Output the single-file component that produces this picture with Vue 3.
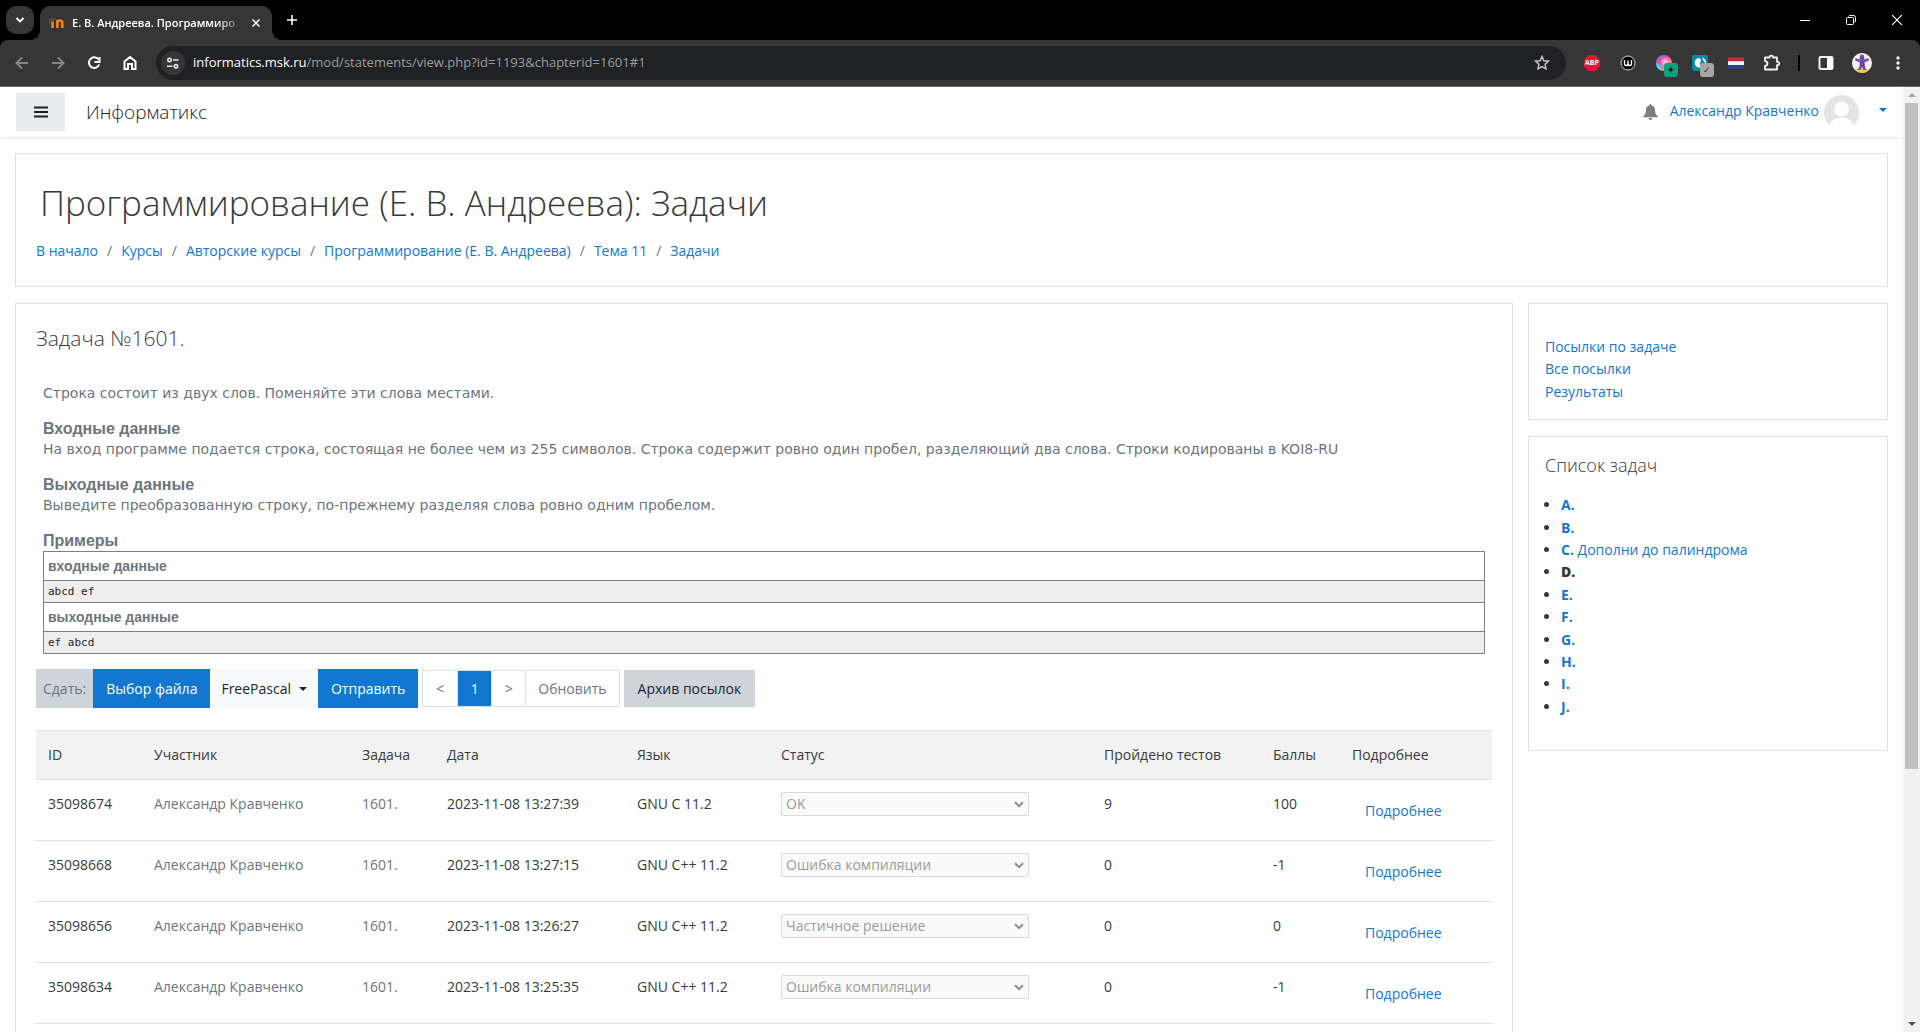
<script setup>
const crumbs = ['В начало', 'Курсы', 'Авторские курсы', 'Программирование (Е. В. Андреева)', 'Тема 11', 'Задачи']
const links = ['Посылки по задаче', 'Все посылки', 'Результаты']
const problems = [
  { key: 'A.' }, { key: 'B.' }, { key: 'C.', title: 'Дополни до палиндрома' }, { key: 'D.', current: true },
  { key: 'E.' }, { key: 'F.' }, { key: 'G.' }, { key: 'H.' }, { key: 'I.' }, { key: 'J.' },
]
const columns = [
  { name: 'ID', width: 106 }, { name: 'Участник', width: 208 }, { name: 'Задача', width: 85 },
  { name: 'Дата', width: 190 }, { name: 'Язык', width: 144 }, { name: 'Статус', width: 323 },
  { name: 'Пройдено тестов', width: 169 }, { name: 'Баллы', width: 79 }, { name: 'Подробнее', width: 152 },
]
const runs = [
  { id: '35098674', date: '2023-11-08 13:27:39', lang: 'GNU C 11.2', status: 'OK', tests: 9, score: 100 },
  { id: '35098668', date: '2023-11-08 13:27:15', lang: 'GNU C++ 11.2', status: 'Ошибка компиляции', tests: 0, score: -1 },
  { id: '35098656', date: '2023-11-08 13:26:27', lang: 'GNU C++ 11.2', status: 'Частичное решение', tests: 0, score: 0 },
  { id: '35098634', date: '2023-11-08 13:25:35', lang: 'GNU C++ 11.2', status: 'Ошибка компиляции', tests: 0, score: -1 },
]
</script>

<template>
  <div class="window">
    <div class="tabstrip">
      <button class="tab-search" aria-label="Поиск вкладок">
        <svg width="10" height="10" viewBox="0 0 10 10"><path d="M1.5 3l3.5 3.5L8.5 3" fill="none" stroke="#fff" stroke-width="1.8" /></svg>
      </button>
      <div class="tab">
        <svg class="favicon" width="16" height="16" viewBox="0 0 16 16">
          <path d="M4.500 13V6.500M9.300 13V5M9.300 8q0-2.500 2.500-2.500t2.500 2.500v5" fill="none" stroke="#f98012" stroke-width="2.600" />
          <path d="M0 5L4 3l4 .5-2.500 3L2 6z" fill="#5a4a42" /><path d="M1.500 5.500v4" stroke="#5a4a42" />
        </svg>
        <span class="tab-title">Е. В. Андреева. Программиро</span>
        <button class="tab-close" aria-label="Закрыть">
          <svg width="8" height="8" viewBox="0 0 8 8"><path d="M.5.5l7 7m0-7l-7 7" stroke="#fff" stroke-width="1.500" /></svg>
        </button>
      </div>
      <button class="new-tab" aria-label="Новая вкладка">
        <svg width="10" height="10" viewBox="0 0 10 10"><path d="M5 0v10M0 5h10" stroke="#fff" stroke-width="1.600" /></svg>
      </button>
      <div class="win-buttons">
        <button aria-label="Свернуть"><svg width="10" height="10" viewBox="0 0 10 10"><path d="M0 5.500h10" stroke="#fff" /></svg></button>
        <button aria-label="Восстановить"><svg width="10" height="10" viewBox="0 0 10 10" fill="none" stroke="#fff"><rect x=".5" y="2.500" width="7" height="7" rx="1" /><path d="M2.500 1.500Q3 .5 4 .5h3.500q2 0 2 2V6q0 1-1 1.500" /></svg></button>
        <button aria-label="Закрыть окно"><svg width="10" height="10" viewBox="0 0 10 10"><path d="M0 0l10 10M10 0L0 10" stroke="#fff" stroke-width="1.200" /></svg></button>
      </div>
    </div>

    <div class="toolbar">
      <button class="nav dim" aria-label="Назад"><svg width="16" height="16" viewBox="0 0 16 16"><path d="M14 8H3M8 2.500L2.500 8 8 13.500" /></svg></button>
      <button class="nav dim" aria-label="Вперёд"><svg width="16" height="16" viewBox="0 0 16 16"><path d="M2 8h11M8 2.500L13.500 8 8 13.500" /></svg></button>
      <button class="nav" aria-label="Обновить страницу"><svg width="16" height="16" viewBox="0 0 16 16"><path d="M12.500 4.500A5.300 5.300 0 1 0 13.200 9.500" /><path d="M13.500 2v5h-5" /></svg></button>
      <button class="nav" aria-label="Домой"><svg width="16" height="16" viewBox="0 0 16 16"><path d="M2.500 14V6.500L8 2l5.500 4.500V14H10V9H6v5z" /></svg></button>
      <div class="omnibox">
        <button class="site-info" aria-label="Сведения о сайте">
          <svg width="14" height="14" viewBox="0 0 14 14" fill="none" stroke="#e8eaed" stroke-width="1.600"><circle cx="3.500" cy="4" r="1.700" /><path d="M7 4h5.500M1 10.200h5.500" /><circle cx="10" cy="10.200" r="1.700" /></svg>
        </button>
        <div class="url"><span class="host">informatics.msk.ru</span>/mod/statements/view.php?id=1193&amp;chapterid=1601#1</div>
        <button class="star" aria-label="В закладки"><svg width="16" height="16" viewBox="0 0 16 16"><path d="M8 1.500l1.900 4.200 4.600.5-3.400 3.100.9 4.500L8 11.500l-4 2.300.9-4.500L1.500 6.200l4.600-.5z" fill="none" stroke="#c7c7c7" stroke-width="1.500" /></svg></button>
      </div>
      <div class="extensions">
        <button class="ext" aria-label="ABP"><span class="abp">ABP</span></button>
        <button class="ext" aria-label="W">
          <svg width="16" height="16" viewBox="0 0 16 16"><circle cx="8" cy="8" r="7" fill="#000" stroke="#d8d8d8" /><path d="M4.500 5v3.500q0 2 1.700 2T8 8.500V5.500v3q0 2 1.800 2t1.700-2V5" fill="none" stroke="#fff" stroke-width="1.400" /></svg>
        </button>
        <button class="ext" aria-label="AI">
          <svg width="16" height="16" viewBox="0 0 16 16"><defs><linearGradient id="ring" x1="0" y1="0" x2="1" y2="1"><stop offset="0" stop-color="#6f7df0" /><stop offset=".4" stop-color="#e84fa5" /><stop offset=".7" stop-color="#ff8d7a" /><stop offset="1" stop-color="#58b6f0" /></linearGradient><radialGradient id="core"><stop offset="0" stop-color="#ffd9ea" /><stop offset="1" stop-color="#ffd9ea" stop-opacity="0" /></radialGradient></defs><circle cx="8" cy="8" r="8" fill="url(#ring)" /><path d="M0 8a8 8 0 0 0 6 7.800L5 10z" fill="#5cc9f2" /><circle cx="9" cy="7" r="5" fill="url(#core)" /></svg>
          <span class="badge green">✦</span>
        </button>
        <button class="ext" aria-label="Расширение">
          <svg width="16" height="16" viewBox="0 0 16 16"><rect width="16" height="16" rx="2" fill="#0389a6" /><path d="M6 3Q1.500 5 3 9.500q2 4 7 3-3-1.500-2-4t1-4.500z" fill="#fff" /><path d="M10 2q4 2 4 6l-2-1z" fill="#fff" /></svg>
          <span class="badge grey">✓</span>
        </button>
        <button class="ext" aria-label="Флаг">
          <svg width="16" height="16" viewBox="0 0 16 16"><path d="M0 2.500h16v3.800H0z" fill="#c8283c" /><path d="M0 6.200h16v3.800H0z" fill="#f4f4f4" /><path d="M0 10h16v3.500H0z" fill="#21468b" /></svg>
        </button>
        <button class="ext" aria-label="Расширения">
          <svg width="18" height="18" viewBox="0 0 18 18"><path d="M2 3.500h4.500q0-1.800 1.800-1.800t1.800 1.800H14v4.300q2.300 0 2.300 1.700T14 11.200V15.500H2V12q2.500-.5 2.500-2.500T2 7z" fill="none" stroke="#f1f1f1" stroke-width="1.800" stroke-linejoin="round" /></svg>
        </button>
        <span class="divider"></span>
        <button class="ext" aria-label="Боковая панель">
          <svg width="16" height="16" viewBox="0 0 16 16"><rect x="1.500" y="2" width="13" height="12" rx="1" fill="none" stroke="#f1f1f1" stroke-width="2" /><path d="M9 2h5v12H9z" fill="#fff" /></svg>
        </button>
        <button class="ext profile" aria-label="Профиль">
          <svg width="20" height="20" viewBox="0 0 20 20"><circle cx="10" cy="10" r="10" fill="#f4f2f6" /><path d="M3 15.500q7-1.500 14 1-3 3.500-7 3.500-5-.5-7-4.500z" fill="#e6cf3c" /><path d="M8 2.500q2-1.800 4 0l.5 4 4-1.500.5 2.500-4.500 2 .5 3.500 1 4h-2.500l-1.500-3-1.500 3H6l1.500-4 .3-3.500L3 7.500 3.500 5 7.500 6.500z" fill="#7a4fb0" /><path d="M8.500 5h3M9 9.500h2.500v3H9z" stroke="#3f2468" stroke-width=".8" fill="#9d79cc" /></svg>
        </button>
        <button class="ext more" aria-label="Меню"><svg width="4" height="16" viewBox="0 0 4 16" fill="#f1f1f1"><circle cx="2" cy="3" r="1.700" /><circle cx="2" cy="8" r="1.700" /><circle cx="2" cy="13" r="1.700" /></svg></button>
      </div>
    </div>

    <div class="viewport">
      <div class="page">
        <header class="navbar">
          <button class="drawer" aria-label="Боковая панель">
            <svg width="14" height="12" viewBox="0 0 14 12"><path d="M0 1.500h14M0 6h14M0 10.500h14" stroke="#1d2125" stroke-width="2" /></svg>
          </button>
          <a class="brand" href="#">Информатикс</a>
          <button class="bell" aria-label="Уведомления">
            <svg width="15" height="16" viewBox="0 0 15 16"><path d="M7.500 0q.9 0 .9 1.200C11 1.800 12 3.800 12 6q0 4.500 3 6.500v.8H0v-.8Q3 10.500 3 6c0-2.200 1-4.200 3.600-4.800Q6.600 0 7.500 0zM5.500 14h4q-.3 2-2 2t-2-2z" fill="#7d7d7d" /></svg>
          </button>
          <a class="user" href="#">
            <span>Александр Кравченко</span>
            <svg width="35" height="35" viewBox="0 0 35 35"><circle cx="17.500" cy="17.500" r="17.500" fill="#e4e4e4" /><circle cx="17.500" cy="14" r="7.500" fill="#fff" /><path d="M5 31q3-8.500 12.500-8.500T30 31v4H5z" fill="#fff" /></svg>
          </a>
          <button class="user-menu" aria-label="Меню пользователя"><i class="caret"></i></button>
        </header>

        <section class="card heading">
          <h1>Программирование (Е. В. Андреева): Задачи</h1>
          <nav class="crumbs">
            <template v-for="(c, i) in crumbs" :key="c">
              <span v-if="i" class="sep">/</span><a href="#">{{ c }}</a>
            </template>
          </nav>
        </section>

        <div class="columns">
          <main class="card main">
            <h2>Задача №1601.</h2>
            <div class="statement">
              <p>Строка состоит из двух слов. Поменяйте эти слова местами.</p>
              <h3>Входные данные</h3>
              <p>На вход программе подается строка, состоящая не более чем из 255 символов. Строка содержит ровно один пробел, разделяющий два слова. Строки кодированы в KOI8-RU</p>
              <h3>Выходные данные</h3>
              <p>Выведите преобразованную строку, по-прежнему разделяя слова ровно одним пробелом.</p>
              <h3>Примеры</h3>
              <table class="sample">
                <tbody>
                  <tr><th>входные данные</th></tr>
                  <tr><td>abcd ef</td></tr>
                  <tr><th>выходные данные</th></tr>
                  <tr><td>ef abcd</td></tr>
                </tbody>
              </table>
            </div>

            <div class="actions">
              <div class="submit">
                <span class="submit-label">Сдать:</span>
                <button class="primary">Выбор файла</button>
                <button class="language">FreePascal <i class="caret"></i></button>
                <button class="primary">Отправить</button>
              </div>
              <div class="pager">
                <button>&lt;</button>
                <button class="active">1</button>
                <button>&gt;</button>
                <button>Обновить</button>
              </div>
              <button class="archive">Архив посылок</button>
            </div>

            <table class="runs">
              <colgroup><col v-for="c in columns" :key="c.name" :style="{ width: c.width + 'px' }" /></colgroup>
              <thead>
                <tr><th v-for="c in columns" :key="c.name">{{ c.name }}</th></tr>
              </thead>
              <tbody>
                <tr v-for="r in runs" :key="r.id">
                  <td>{{ r.id }}</td>
                  <td class="muted">Александр Кравченко</td>
                  <td class="muted">1601.</td>
                  <td>{{ r.date }}</td>
                  <td>{{ r.lang }}</td>
                  <td>
                    <div class="status">
                      <select disabled :aria-label="'Статус ' + r.id"><option>{{ r.status }}</option></select>
                      <svg width="10" height="7" viewBox="0 0 10 7"><path d="M1 1.200l4 4 4-4" fill="none" stroke="#8c8c8c" stroke-width="2" /></svg>
                    </div>
                  </td>
                  <td>{{ r.tests }}</td>
                  <td>{{ r.score }}</td>
                  <td class="details"><a href="#">Подробнее</a></td>
                </tr>
              </tbody>
            </table>
          </main>

          <aside>
            <section class="card side-links">
              <a v-for="l in links" :key="l" href="#">{{ l }}</a>
            </section>
            <section class="card side-list">
              <h4>Список задач</h4>
              <ul>
                <li v-for="p in problems" :key="p.key">
                  <b v-if="p.current" class="current">{{ p.key }}</b>
                  <a v-else href="#"><b>{{ p.key }}</b>{{ p.title ? ' ' + p.title : '' }}</a>
                </li>
              </ul>
            </section>
          </aside>
        </div>
      </div>
      <div class="scrollbar">
        <i class="arrow up"></i>
        <div class="track"><div class="thumb"></div></div>
        <i class="arrow down"></i>
      </div>
    </div>
  </div>
</template>

<style>
body { background: #fff; }
</style>

<style scoped>
* { box-sizing: border-box; }
button { border: 0; padding: 0; background: none; font: inherit; color: inherit; display: flex; align-items: center; justify-content: center; flex: none; }
a { color: #1177d1; text-decoration: none; }
h1, h2, h3, h4, p, ul { margin: 0; padding: 0; }
svg { display: block; flex: none; }

.window { display: flex; flex-direction: column; height: 100vh; overflow: hidden; font-family: "Open Sans", "Noto Sans", sans-serif; font-size: 14px; line-height: 1.5; color: #373a3c; }

.tabstrip { display: flex; flex: none; height: 40px; background: #000; color: #fff; }
.tab-search { width: 28px; height: 28px; margin: 6px 6px 0; border-radius: 10px; background: #363636; }
.tab { position: relative; display: flex; align-items: center; width: 232px; margin-top: 6px; padding: 0 8px; border-radius: 10px 10px 0 0; background: #363636; }
.tab::before, .tab::after { content: ""; position: absolute; bottom: 0; width: 10px; height: 10px; }
.tab::before { left: -10px; background: radial-gradient(circle at 0 0, transparent 10px, #363636 10px); }
.tab::after { right: -10px; background: radial-gradient(circle at 100% 0, transparent 10px, #363636 10px); }
.tab-title { flex: 1; margin-left: 8px; white-space: nowrap; font-size: 11px; font-weight: 600; mask-image: linear-gradient(90deg, #000 82%, transparent 98%); }
.tab-close { width: 16px; height: 16px; }
.new-tab { width: 28px; margin-left: 6px; }
.win-buttons { display: flex; margin-left: auto; }
.win-buttons button { width: 46px; height: 40px; }

.toolbar { display: flex; flex: none; align-items: center; height: 47px; padding: 0 4px; background: #363636; border-bottom: 1px solid #6b6b6b; border-radius: 8px 8px 0 0; box-shadow: 0 -8px 0 #000; }
.tabstrip { position: relative; z-index: 1; }
.nav { width: 36px; height: 34px; }
.nav svg { fill: none; stroke: #fff; stroke-width: 2; }
.nav.dim svg { stroke: #858585; }
.omnibox { display: flex; flex: 1; align-items: center; height: 34px; margin-left: 8px; padding: 0 16px 0 5px; border-radius: 17px; background: #202124; }
.site-info { width: 24px; height: 24px; border-radius: 12px; background: #363636; }
.url { flex: 1; margin-left: 8px; color: #9a9da1; font-size: 13px; white-space: nowrap; }
.host { color: #fff; }
.extensions { display: flex; align-items: center; margin-left: 8px; }
.ext { position: relative; width: 36px; height: 34px; }
.abp { width: 16px; height: 16px; background: #f1123a; clip-path: polygon(30% 0, 70% 0, 100% 30%, 100% 70%, 70% 100%, 30% 100%, 0 70%, 0 30%); color: #fff; font-size: 7px; font-weight: 700; line-height: 16px; }
.badge { position: absolute; left: 18px; top: 17px; width: 14px; height: 14px; border-radius: 3px; font-size: 9px; line-height: 14px; }
.badge.green { background: #0aa17c; color: #000; }
.badge.grey { background: #a5a5a5; color: #333; }
.divider { width: 2px; height: 16px; margin: 0 8px; background: #000; }
.more { width: 36px; }

.viewport { display: flex; flex: 1; min-height: 0; }
.page { flex: 1; min-width: 0; overflow: hidden; }
.scrollbar { display: flex; flex-direction: column; align-items: center; width: 17px; padding: 6px 0; background: #f1f1f1; }
.track { flex: 1; width: 13px; margin: 6px 0; }
.thumb { height: 73%; background: #c1c1c1; }
.arrow { border: 4px solid transparent; }
.arrow.up { border-top: 0; border-bottom-color: #a3a3a3; }
.arrow.down { border-bottom: 0; border-top-color: #505050; }

.navbar { display: flex; align-items: center; height: 50px; padding: 0 16px; box-shadow: 0 2px 4px rgba(0, 0, 0, .08); }
.drawer { width: 49px; height: 38px; background: #e9ecef; }
.brand { margin: 0 auto 0 21px; font-size: 19px; font-weight: 300; color: #1d2125; }
.user { display: flex; align-items: center; gap: 5px; margin-left: 12px; }
.user span { padding-bottom: 3px; }
.user-menu { margin: 0 0 4px 20px; }
.caret { width: 0; border: 4px solid transparent; border-bottom: 0; border-top-color: currentColor; }
.user-menu .caret { color: #1177d1; }

.card { border: 1px solid #dfdfdf; background: #fff; }
.heading { margin: 16px 15px 0; padding: 24px 20px 25px; }
h1 { margin-left: 4px; font-size: 35px; font-weight: 300; line-height: 50px; }
.crumbs { display: flex; gap: 9px; margin-top: 12px; }
.sep { color: #6c757d; }

.columns { display: flex; align-items: flex-start; gap: 15px; margin: 16px 15px 0; }
.main { flex: 1; min-width: 0; padding: 18px 20px; min-height: 900px; }
h2 { font-size: 21px; font-weight: 300; line-height: 32px; }
.statement { margin: 29px 7px 0; color: #6c757d; }
.statement p { margin-bottom: 15px; font: 14px/20px "DejaVu Sans", sans-serif; }
.statement h3 { font: bold 16px/21px "Liberation Sans", sans-serif; }
.sample { width: 100%; border-collapse: collapse; }
.sample th, .sample td { border: 1px solid #808080; padding: 0 4px; text-align: left; }
.sample th { height: 29px; font: bold 14px/20px "Liberation Sans", sans-serif; }
.sample td { height: 22px; background: #eee; color: #212529; font: 11px/16px "DejaVu Sans Mono", monospace; }

.actions { display: flex; align-items: center; gap: 4px; margin-top: 15px; }
.submit { display: flex; height: 39px; }
.submit-label { display: flex; align-items: center; padding: 0 7px; background: #ced4da; color: #6c757d; }
.primary { padding: 0 13px; background: #1177d1; color: #fff; }
.language { gap: 8px; padding: 0 11px; background: #f8f9fa; color: #212529; }
.pager { display: flex; height: 37px; border: 1px solid #dee2e6; }
.pager button { min-width: 34px; padding: 0 12px; color: #6c757d; }
.pager button + button { border-left: 1px solid #dee2e6; }
.pager button.active { background: #1177d1; color: #fff; }
.archive { height: 37px; padding: 0 14px; background: #ced4da; color: #212529; }

.runs { width: 100%; margin-top: 22px; table-layout: fixed; border-collapse: collapse; }
.runs th, .runs td { padding: 12px; border-top: 1px solid #dee2e6; text-align: left; vertical-align: top; font-weight: 400; line-height: 24px; }
.runs th { background: #f2f2f2; }
.runs tbody tr:last-child { border-bottom: 1px solid #dee2e6; }
.muted { color: #6c757d; }
.runs td.muted { color: #6c757d; }
.runs .details { padding: 19px 25px 17px; }
.status { position: relative; width: 248px; }
.status select { appearance: none; display: block; width: 100%; height: 24px; padding: 0 4px; border: 1px solid #d9d9d9; border-radius: 2px; background: #fafafa; color: #9a9a9a; font: inherit; line-height: 22px; opacity: 1; }
.status svg { position: absolute; right: 5px; top: 9px; }

aside { display: flex; flex-direction: column; gap: 16px; width: 360px; line-height: 1.6; }
.side-links { display: flex; flex-direction: column; padding: 32px 16px 16px; }
.side-list { padding: 16px 16px 32px; }
.current { font-weight: 800; }
h4 { font-size: 18px; font-weight: 300; line-height: 24px; }
.side-list ul { margin-top: 17px; padding-left: 16px; }
</style>
